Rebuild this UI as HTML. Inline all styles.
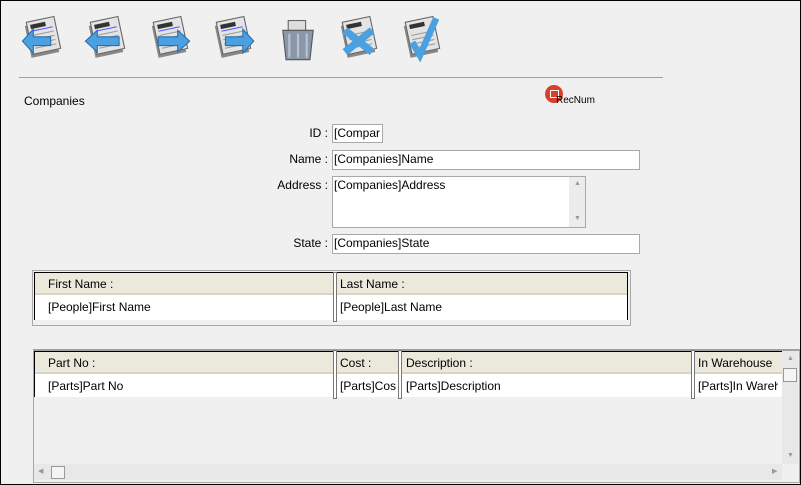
<!DOCTYPE html><html><head><style>
body{margin:0;width:801px;height:485px;background:#f0f0f0;font-family:"Liberation Sans",sans-serif;font-size:12px;color:#000;position:relative;overflow:hidden}
.a{position:absolute}
.f{position:absolute;background:#fff;border:1px solid #a8a8a8;box-sizing:border-box;padding:2px 1px;white-space:nowrap;overflow:hidden;line-height:13px}
.l{position:absolute;text-align:right;width:120px;line-height:14px}
.ic{position:absolute;top:14px;width:48px;height:50px}
.hd{position:absolute;background:#ebe8dc;height:22px;line-height:22px;border-bottom:2px solid #d8d4c4;box-sizing:border-box}
.cell{position:absolute;white-space:nowrap;overflow:hidden}
.div{position:absolute;width:2px;border:1px solid #777;background:#fff}
.ar{position:absolute;font-size:7px;color:#999;line-height:8px}
</style></head><body>
<div class="a" style="left:0;top:0;width:799px;height:483px;border:1px solid #000"></div>
<svg class="ic" style="left:18px" viewBox="0 0 44 46"><g transform="rotate(-12 22 23)"><rect x="9" y="8" width="26" height="30" fill="#888"/><rect x="11" y="5" width="26" height="30" fill="#e4e4e4" stroke="#666"/><rect x="14" y="8" width="14" height="4" fill="#333"/><line x1="14" y1="14" x2="34" y2="14" stroke="#55f"/><path d="M14 18h20M14 22h20M14 26h20M14 30h20" stroke="#999"/></g><path d="M4 25l10-11v7h16v8H14v7z" fill="#4aa0e0" stroke="#2c6ea8"/></svg>
<svg class="ic" style="left:82px" viewBox="0 0 44 46"><g transform="rotate(-12 22 23)"><rect x="9" y="8" width="26" height="30" fill="#888"/><rect x="11" y="5" width="26" height="30" fill="#e4e4e4" stroke="#666"/><rect x="14" y="8" width="14" height="4" fill="#333"/><line x1="14" y1="14" x2="34" y2="14" stroke="#55f"/><path d="M14 18h20M14 22h20M14 26h20M14 30h20" stroke="#999"/></g><path d="M3 25l11-10v6h20v8H14v6z" fill="#4aa0e0" stroke="#2c6ea8"/></svg>
<svg class="ic" style="left:145px" viewBox="0 0 44 46"><g transform="rotate(-12 22 23)"><rect x="9" y="8" width="26" height="30" fill="#888"/><rect x="11" y="5" width="26" height="30" fill="#e4e4e4" stroke="#666"/><rect x="14" y="8" width="14" height="4" fill="#333"/><line x1="14" y1="14" x2="34" y2="14" stroke="#55f"/><path d="M14 18h20M14 22h20M14 26h20M14 30h20" stroke="#999"/></g><path d="M41 25l-11-10v6H12v8h18v6z" fill="#4aa0e0" stroke="#2c6ea8"/></svg>
<svg class="ic" style="left:208px" viewBox="0 0 44 46"><g transform="rotate(-12 22 23)"><rect x="9" y="8" width="26" height="30" fill="#888"/><rect x="11" y="5" width="26" height="30" fill="#e4e4e4" stroke="#666"/><rect x="14" y="8" width="14" height="4" fill="#333"/><line x1="14" y1="14" x2="34" y2="14" stroke="#55f"/><path d="M14 18h20M14 22h20M14 26h20M14 30h20" stroke="#999"/></g><path d="M42 25l-10-11v7H16v8h16v7z" fill="#4aa0e0" stroke="#2c6ea8"/></svg>
<svg class="ic" style="left:274px" viewBox="0 0 44 46"><rect x="13" y="6" width="16" height="10" fill="#ddd" stroke="#666"/><path d="M8 15h28l-3 27H11z" fill="#8a97a8" stroke="#555"/><path d="M14 18v22M22 18v22M30 18v22" stroke="#b8c2d0" stroke-width="2"/></svg>
<svg class="ic" style="left:334px" viewBox="0 0 44 46"><g transform="rotate(-12 22 23)"><rect x="9" y="8" width="26" height="30" fill="#888"/><rect x="11" y="5" width="26" height="30" fill="#e4e4e4" stroke="#666"/><rect x="14" y="8" width="14" height="4" fill="#333"/><path d="M14 18h20M14 22h20M14 26h20M14 30h20" stroke="#999"/></g><path d="M10 15l25 20M35 15L10 35" stroke="#4aa0e0" stroke-width="7"/></svg>
<svg class="ic" style="left:397px" viewBox="0 0 44 46"><g transform="rotate(-12 22 23)"><rect x="9" y="8" width="26" height="30" fill="#888"/><rect x="11" y="5" width="26" height="30" fill="#e4e4e4" stroke="#666"/><rect x="14" y="8" width="14" height="4" fill="#333"/><path d="M14 18h20M14 22h20M14 26h20M14 30h20" stroke="#999"/></g><path d="M14 26l7 12 15-34" fill="none" stroke="#4aa0e0" stroke-width="6"/></svg>
<div class="a" style="left:19px;top:77px;width:644px;height:1px;background:#a0a0a0"></div>
<div class="a" style="left:24px;top:94px">Companies</div>
<div class="a" style="left:545px;top:85px;width:18px;height:18px;border-radius:50%;background:#d8402c"></div>
<div class="a" style="left:550px;top:90px;width:7px;height:6px;border:1px solid #fff"></div>
<div class="a" style="left:556px;top:95px;font-size:10px">RecNum</div>
<div class="l" style="left:208px;top:126px">ID :</div>
<div class="f" style="left:332px;top:124px;width:51px;height:19px">[Compar</div>
<div class="l" style="left:208px;top:152px">Name :</div>
<div class="f" style="left:332px;top:150px;width:308px;height:20px">[Companies]Name</div>
<div class="l" style="left:208px;top:178px">Address :</div>
<div class="f" style="left:332px;top:176px;width:254px;height:52px">[Companies]Address</div>
<div class="a" style="left:569px;top:177px;width:16px;height:50px;background:#ececec"></div>
<div class="ar" style="left:574px;top:180px">▲</div>
<div class="ar" style="left:574px;top:215px">▼</div>
<div class="l" style="left:208px;top:236px">State :</div>
<div class="f" style="left:332px;top:234px;width:308px;height:20px">[Companies]State</div>
<div class="a" style="left:32px;top:270px;width:597px;height:54px;border:1px solid #a8a8a8"></div>
<div class="a" style="left:34px;top:272px;width:592px;height:47px;border:1px solid #000;border-bottom:none;background:#fff"></div>
<div class="hd" style="left:35px;top:273px;width:592px"></div>
<div class="cell" style="left:48px;top:277px">First Name :</div>
<div class="cell" style="left:340px;top:277px">Last Name :</div>
<div class="cell" style="left:48px;top:300px">[People]First Name</div>
<div class="cell" style="left:340px;top:300px">[People]Last Name</div>
<div class="div" style="left:333px;top:272px;height:48px"></div>
<div class="a" style="left:33px;top:349px;width:765px;height:131px;border:1px solid #a8a8a8;border-top:2px solid #a0a0a0"></div>
<div class="a" style="left:34px;top:351px;width:747px;height:45px;border:1px solid #000;border-bottom:none;background:#fff"></div>
<div class="hd" style="left:35px;top:352px;width:747px"></div>
<div class="cell" style="left:48px;top:356px">Part No :</div>
<div class="cell" style="left:340px;top:356px">Cost :</div>
<div class="cell" style="left:406px;top:356px">Description :</div>
<div class="cell" style="left:698px;top:356px">In Warehouse</div>
<div class="cell" style="left:48px;top:379px">[Parts]Part No</div>
<div class="cell" style="left:340px;top:379px;width:56px">[Parts]Cos</div>
<div class="cell" style="left:406px;top:379px">[Parts]Description</div>
<div class="cell" style="left:698px;top:379px;width:80px">[Parts]In Wareh</div>
<div class="div" style="left:333px;top:350px;height:47px"></div>
<div class="div" style="left:398px;top:350px;height:47px"></div>
<div class="div" style="left:691px;top:350px;height:47px"></div>
<div class="a" style="left:782px;top:351px;width:16px;height:113px;background:#e8e8e8"></div>
<div class="ar" style="left:787px;top:355px">▲</div>
<div class="ar" style="left:787px;top:452px">▼</div>
<div class="a" style="left:783px;top:368px;width:14px;height:14px;background:#f4f4f4;border:1px solid #999;box-sizing:border-box"></div>
<div class="a" style="left:34px;top:464px;width:748px;height:16px;background:#e8e8e8"></div>
<div class="ar" style="left:38px;top:468px">◀</div>
<div class="ar" style="left:772px;top:468px">▶</div>
<div class="a" style="left:51px;top:466px;width:14px;height:13px;background:#f4f4f4;border:1px solid #999;box-sizing:border-box"></div>
</body></html>
